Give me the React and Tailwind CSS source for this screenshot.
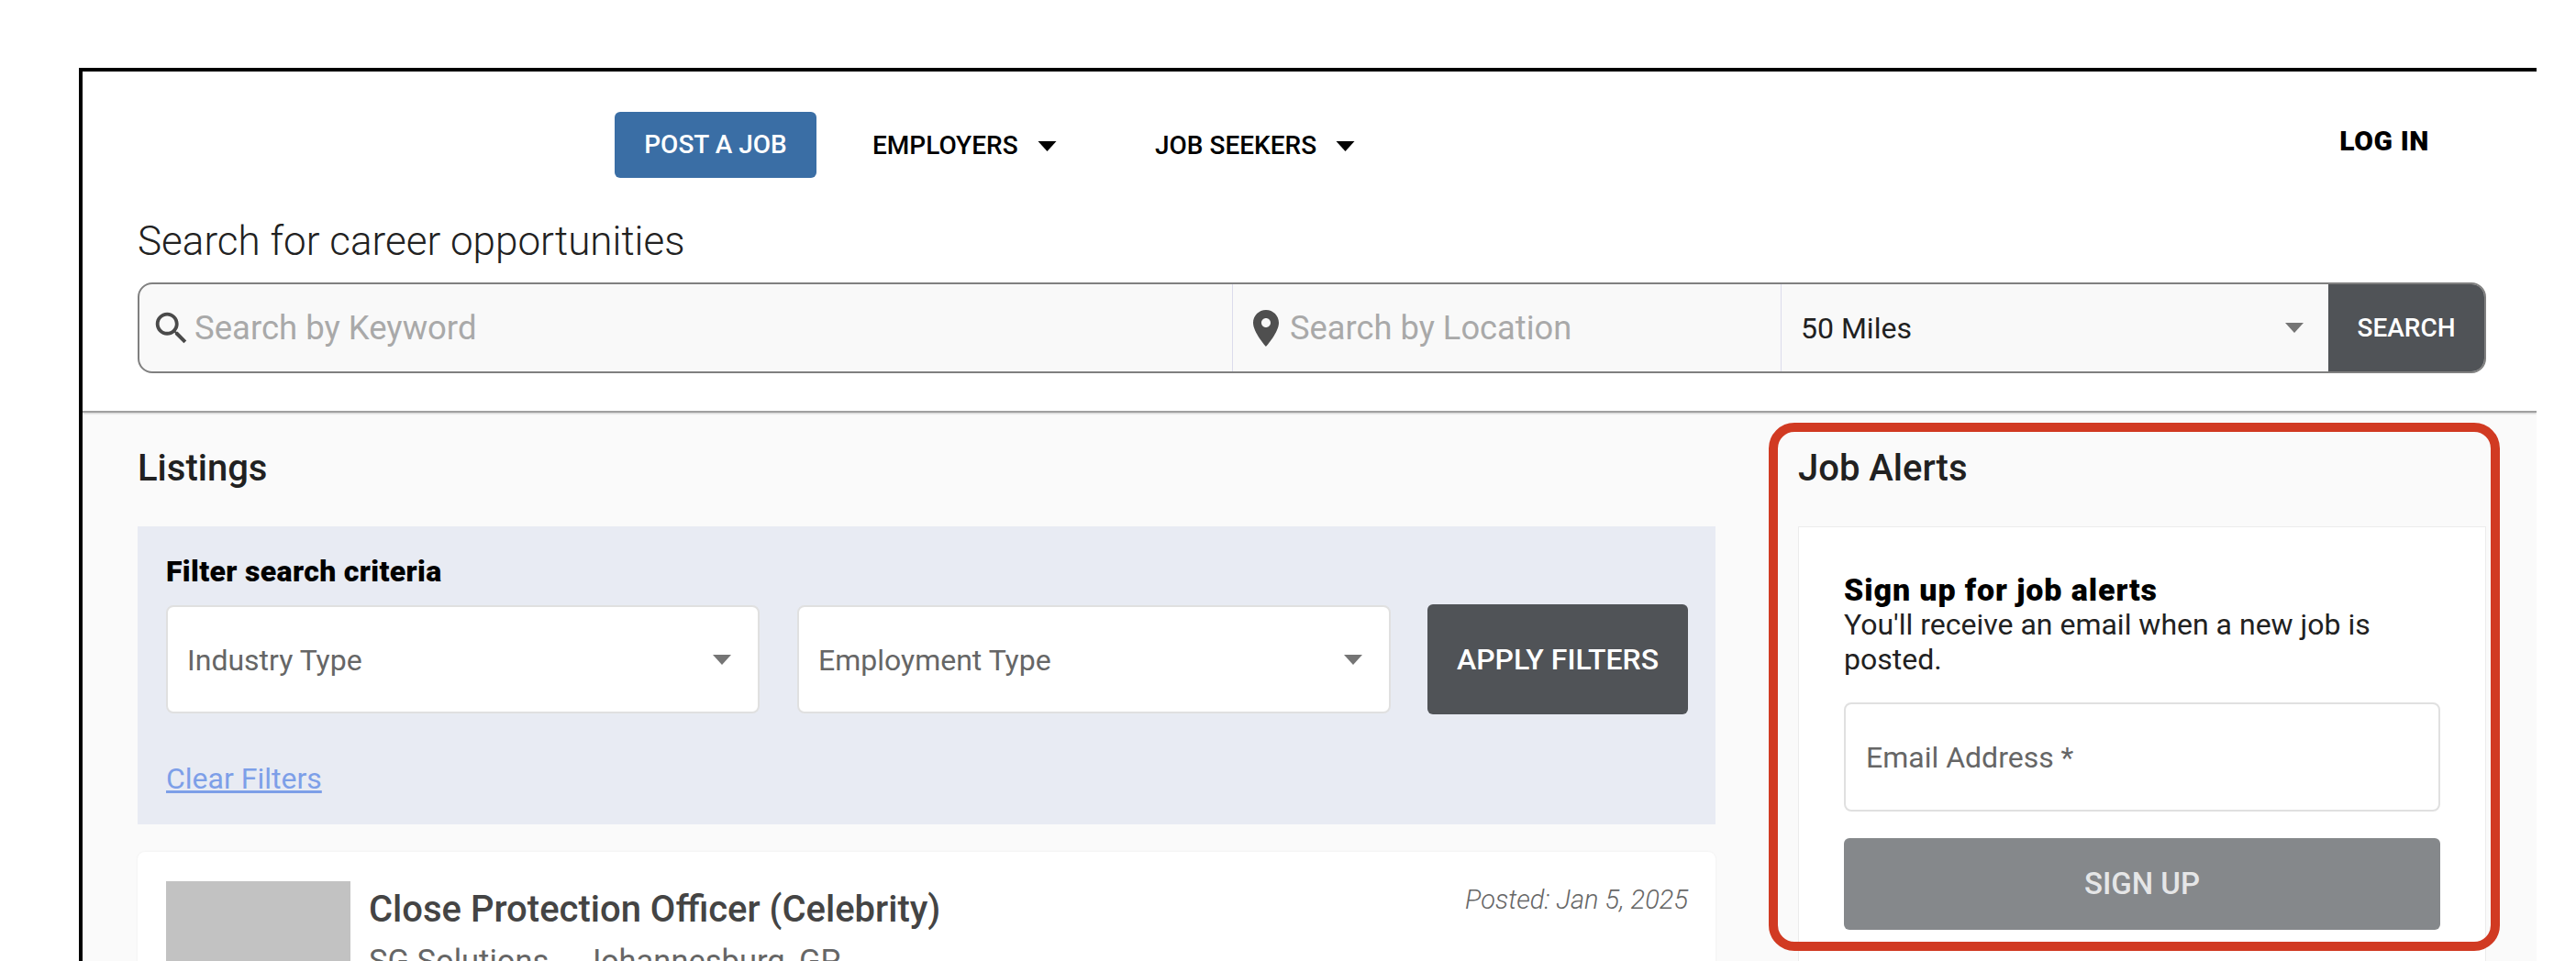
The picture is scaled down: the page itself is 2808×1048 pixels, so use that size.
function Caret({ className }) {
  return (
    <svg viewBox="0 0 20 11" className={className} fill="currentColor" aria-hidden="true">
      <path d="M0 0h20L10 11z" />
    </svg>
  );
}

function NavItem({ label, width }) {
  return (
    <div className={`flex items-center text-[28px] leading-[34px] font-medium text-black ${width}`}>
      <span>{label}</span>
      <Caret className="ml-[21px] w-[21px] h-[11px]" />
    </div>
  );
}

function SelectBox({ label, className }) {
  return (
    <div className={`flex items-center justify-between h-[118px] bg-white rounded-[8px] border-2 border-[#e0e0e0] pl-[21px] pr-[29px] text-[32px] text-[#666666] ${className}`}>
      <span className="pt-[2px]">{label}</span>
      <Caret className="w-[20px] h-[11px] text-[#757575]" />
    </div>
  );
}

export default function App() {
  return (
    <div className="relative w-[2808px] h-[1048px] overflow-hidden bg-white pt-[74px] pl-[86px] pr-[43px] font-['Roboto',sans-serif]">
      <div className="h-[974px] border-t-4 border-l-4 border-black bg-[#fafafa] overflow-hidden">
        <header className="h-[372px] bg-white border-b-2 border-[#a0a0a0] shadow-[0_1px_2px_rgba(0,0,0,0.2)] pl-[60px] pr-[55px]">
          <div className="flex items-start pl-[520px] pt-[44px] h-[159px]">
            <div className="flex items-center justify-center w-[220px] h-[72px] rounded-[6px] bg-[#3a6ea5] text-white text-[28px] font-medium">POST A JOB</div>
            <div className="flex items-center h-[72px] mt-[1px] ml-[61px]">
              <NavItem label="EMPLOYERS" width="w-[308px]" />
              <NavItem label="JOB SEEKERS" width="w-auto" />
            </div>
            <div className="ml-auto mr-[62px] pt-[14px] text-[30px] leading-[36px] font-black text-black tracking-[0.6px]">LOG IN</div>
          </div>
          <h1 className="text-[44px] leading-[52px] font-light text-[#212121]">Search for career opportunities</h1>
          <div className="flex h-[99px] mt-[19px] w-[2560px] rounded-[16px] border-2 border-[#808080] bg-[#f9f9f9] overflow-hidden">
            <div className="flex items-center w-[1192px] border-r border-[#dcdcec] pl-[12px]">
              <svg viewBox="0 0 24 24" className="w-[46px] h-[46px] text-[#4a4a4a] shrink-0" fill="currentColor" aria-hidden="true">
                <path d="M15.5 14h-.79l-.28-.27C15.41 12.59 16 11.11 16 9.5 16 5.91 13.09 3 9.5 3S3 5.91 3 9.5 5.91 16 9.5 16c1.61 0 3.09-.59 4.23-1.57l.27.28v.79l5 4.99L20.49 19l-4.99-5zm-6 0C7.01 14 5 11.99 5 9.5S7.01 5 9.5 5 14 7.01 14 9.5 11.99 14 9.5 14z" />
              </svg>
              <span className="ml-[2px] pt-[2px] text-[36.5px] text-[#a9a9a9]">Search by Keyword</span>
            </div>
            <div className="flex items-center w-[598px] border-r border-[#dcdcec] pl-[12px]">
              <svg viewBox="0 0 24 24" className="w-[48px] h-[48px] text-[#4f4f4f] shrink-0" fill="currentColor" aria-hidden="true">
                <path d="M12 2C8.13 2 5 5.13 5 9c0 5.25 7 13 7 13s7-7.75 7-13c0-3.87-3.13-7-7-7zm0 9.5c-1.38 0-2.5-1.12-2.5-2.5s1.12-2.5 2.5-2.5 2.5 1.12 2.5 2.5-1.12 2.5-2.5 2.5z" />
              </svg>
              <span className="ml-[2px] pt-[2px] text-[36.3px] text-[#a9a9a9]">Search by Location</span>
            </div>
            <div className="flex items-center justify-between w-[596px] pl-[21px] pr-[27px] text-[32px] text-[#212121]">
              <span>50 Miles</span>
              <Caret className="w-[20px] h-[11px] text-[#757575]" />
            </div>
            <div className="flex items-center justify-center flex-1 bg-[#505357] text-white text-[28px] font-medium">SEARCH</div>
          </div>
        </header>
        <main className="flex pl-[60px]">
          <section className="w-[1720px]">
            <h2 className="pt-[37px] h-[124px] text-[40px] leading-[47px] font-medium text-[#212121]">Listings</h2>
            <div className="h-[325px] bg-[#e8ebf3] pl-[31px] pr-[30px] pt-[32px]">
              <div className="text-[32px] tracking-[0.35px] leading-[34px] font-black text-black">Filter search criteria</div>
              <div className="flex items-start mt-[20px]">
                <SelectBox label="Industry Type" className="w-[647px]" />
                <SelectBox label="Employment Type" className="w-[647px] ml-[41px]" />
                <div className="flex items-center justify-center w-[284px] h-[120px] -mt-[1px] ml-[40px] rounded-[6px] bg-[#505357] text-white text-[32px] font-medium">APPLY FILTERS</div>
              </div>
              <a className="block mt-[51px] text-[32px] leading-[38px] text-[#7d9fe8] underline">Clear Filters</a>
            </div>
            <div className="flex mt-[30px] h-[300px] bg-white rounded-[8px] pl-[31px] pr-[30px] pt-[32px] shadow-[0_0_3px_rgba(0,0,0,0.06)]">
              <div className="w-[201px] h-[200px] bg-[#c2c2c2] shrink-0" />
              <div className="ml-[20px] flex-1">
                <div className="text-[40px] leading-[48px] font-medium text-[#444444] mt-[7px]">Close Protection Officer (Celebrity)</div>
                <div className="mt-[12px] text-[34.5px] leading-[40px] text-[#666666]">SG Solutions<span className="mx-[14px]">-</span>Johannesburg, GP</div>
              </div>
              <div className="mt-[3px] text-[29px] leading-[34px] font-light italic text-[#666666] self-start">Posted: Jan 5, 2025</div>
            </div>
          </section>
          <aside className="w-[750px] ml-[90px]">
            <h2 className="pt-[37px] h-[124px] text-[40px] leading-[47px] font-medium text-[#212121]">Job Alerts</h2>
            <div className="h-[500px] bg-white border border-[#ececec] pl-[49px] pr-[49px] pt-[49px]">
              <div className="text-[34px] tracking-[0.9px] leading-[38px] font-black text-black">Sign up for job alerts</div>
              <p className="text-[32px] leading-[38px] text-[#212121]">You'll receive an email when a new job is posted.</p>
              <div className="flex items-center h-[119px] mt-[28px] rounded-[8px] border-2 border-[#e0e0e0] bg-white pl-[22px] text-[32px] text-[#666666]">
                <span>Email Address *</span>
              </div>
              <div className="flex items-center justify-center h-[100px] mt-[29px] rounded-[6px] bg-[#85888b] text-[#e5e6e7] text-[33px] font-medium">SIGN UP</div>
            </div>
          </aside>
        </main>
      </div>
      <div className="absolute left-[1928px] top-[461px] w-[797px] h-[576px] rounded-[28px] border-[10px] border-[#d13a22]" />
    </div>
  );
}
